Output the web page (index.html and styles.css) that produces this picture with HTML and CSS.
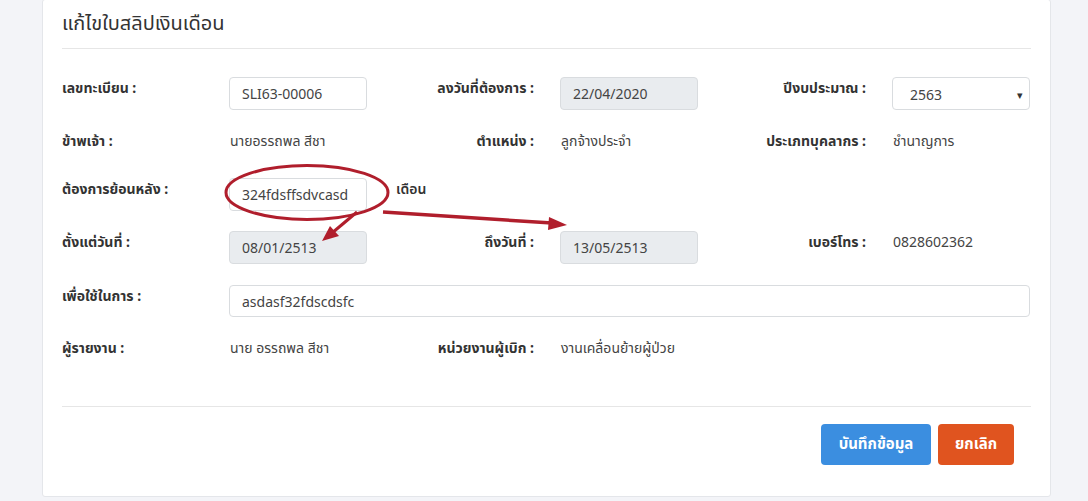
FILE: index.html
```html
<!DOCTYPE html>
<html lang="th">
<head>
<meta charset="utf-8">
<title>แก้ไขใบสลิปเงินเดือน</title>
<link rel="stylesheet" href="styles.css">
</head>
<body>
<div class="page">
  <div class="card">
    <div class="card-header">แก้ไขใบสลิปเงินเดือน</div>
    <div class="card-body">
      <div class="row row-1">
        <div class="label">เลขทะเบียน :</div>
        <div class="input">SLI63-00006</div>
        <div class="label right">ลงวันที่ต้องการ :</div>
        <div class="input disabled">22/04/2020</div>
        <div class="label right">ปีงบประมาณ :</div>
        <div class="input select">2563<span class="caret">▾</span></div>
      </div>
      <div class="row row-2">
        <div class="label">ข้าพเจ้า :</div>
        <div class="value">นายอรรถพล สีชา</div>
        <div class="label right">ตำแหน่ง :</div>
        <div class="value">ลูกจ้างประจำ</div>
        <div class="label right">ประเภทบุคลากร :</div>
        <div class="value">ชำนาญการ</div>
      </div>
      <div class="row row-3">
        <div class="label">ต้องการย้อนหลัง :</div>
        <div class="input">324fdsffsdvcasd</div>
        <div class="label unit">เดือน</div>
      </div>
      <div class="row row-4">
        <div class="label">ตั้งแต่วันที่ :</div>
        <div class="input disabled">08/01/2513</div>
        <div class="label right">ถึงวันที่ :</div>
        <div class="input disabled">13/05/2513</div>
        <div class="label right">เบอร์โทร :</div>
        <div class="value">0828602362</div>
      </div>
      <div class="row row-5">
        <div class="label">เพื่อใช้ในการ :</div>
        <div class="input wide">asdasf32fdscdsfc</div>
      </div>
      <div class="row row-6">
        <div class="label">ผู้รายงาน :</div>
        <div class="value">นาย อรรถพล สีชา</div>
        <div class="label right">หน่วยงานผู้เบิก :</div>
        <div class="value">งานเคลื่อนย้ายผู้ป่วย</div>
      </div>
    </div>
    <div class="card-footer">
      <button class="btn btn-save">บันทึกข้อมูล</button>
      <button class="btn btn-cancel">ยกเลิก</button>
    </div>
  </div>
  <svg class="annot" width="1088" height="501" viewBox="0 0 1088 501">
    <ellipse cx="307" cy="193.5" rx="81" ry="27" fill="none" stroke="#b01e2c" stroke-width="3"/>
    <line x1="357" y1="213" x2="332" y2="234" stroke="#b01e2c" stroke-width="3"/>
    <polygon points="322,242 330,227 339,237" fill="#b01e2c"/>
    <line x1="383" y1="213" x2="552" y2="224" stroke="#b01e2c" stroke-width="3.5"/>
    <polygon points="567,226 549,218 548,231" fill="#b01e2c"/>
  </svg>
</div>
</body>
</html>
```
FILE: styles.css
```css
html, body {
  margin: 0;
  padding: 0;
}
body {
  background: #f3f4f8;
  font-family: "Noto Sans", "Noto Sans Thai", "Liberation Sans", sans-serif;
  font-size: 14px;
  color: #444;
  width: 1088px;
  height: 501px;
  overflow: hidden;
}
.page {
  position: relative;
  width: 1088px;
  height: 501px;
}
.card {
  margin-left: 42px;
  margin-top: -1px;
  width: 969px;
  background: #fff;
  border: 1px solid #e4e6ea;
  border-radius: 3px;
  padding: 0 19px 31px;
}
.card-header {
  height: 49px;
  box-sizing: border-box;
  padding-top: 10px;
  font-size: 20px;
  line-height: 26px;
  color: #333;
  border-bottom: 1px solid #e6e6e6;
}
.card-body {
  padding-top: 28px;
}
.row {
  display: grid;
  grid-template-columns: 167px 138px 193px 138px 194px 138px;
  align-items: start;
}
.row-1 { margin-bottom: 20px; }
.row-2 { margin-bottom: 26px; }
.row-3 { margin-bottom: 20px; }
.row-4 { margin-bottom: 21px; }
.row-5 { margin-bottom: 20px; }
.label {
  font-weight: 700;
  color: #333;
  line-height: 22px;
}
.label.right {
  text-align: right;
  padding-right: 26px;
}
.label.unit {
  font-weight: 600;
  padding-left: 29px;
}
.value {
  line-height: 22px;
  color: #444;
  padding-left: 1px;
}
.input {
  height: 33px;
  box-sizing: border-box;
  border: 1px solid #d9dcdf;
  border-radius: 4px;
  padding: 0 12px;
  line-height: 31px;
  color: #444;
  background: #fff;
}
.input.disabled {
  background: #e9ecef;
}
.input.select {
  display: flex;
  justify-content: space-between;
  padding-left: 17px;
  padding-right: 6px;
  line-height: 33px;
}
.caret {
  font-size: 11px;
  color: #333;
}
.input.wide {
  grid-column: 2 / 7;
  height: 32px;
}
.card-footer {
  margin-top: 47px;
  border-top: 1px solid #e6e6e6;
  padding-top: 17px;
  display: flex;
  justify-content: flex-end;
  gap: 7px;
  padding-right: 17px;
}
.btn {
  height: 41px;
  border: none;
  border-radius: 4px;
  color: #fff;
  font-family: inherit;
  font-size: 15px;
  font-weight: 700;
  padding: 0 14px;
  cursor: pointer;
}
.btn-save {
  background: #3b8ee0;
  width: 110px;
}
.btn-cancel {
  background: #e0541f;
  width: 76px;
}
.annot {
  position: absolute;
  left: 0;
  top: 0;
  pointer-events: none;
}
```
